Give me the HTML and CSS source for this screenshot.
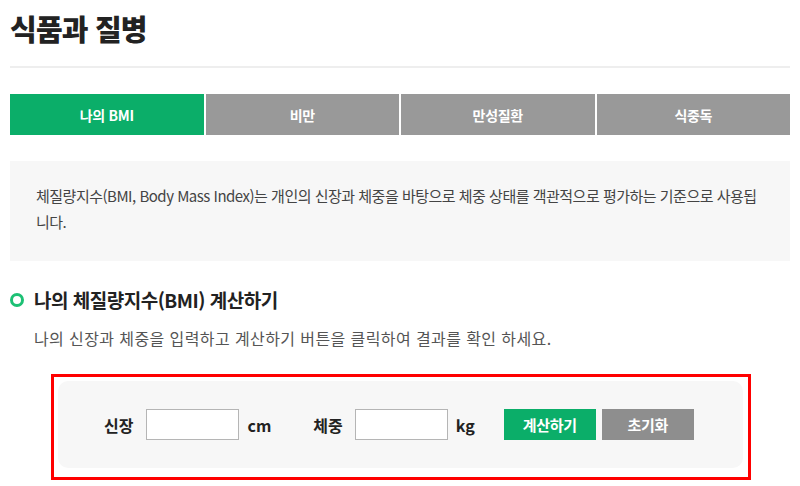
FILE: index.html
```html
<!DOCTYPE html>
<html lang="ko">
<head>
<meta charset="utf-8">
<title>식품과 질병</title>
<link rel="stylesheet" href="styles.css">
</head>
<body>
<div class="page">
  <header class="page-head">
    <h1 class="page-title">식품과 질병</h1>
  </header>
  <nav class="tabs">
    <a class="tab active">나의 BMI</a>
    <a class="tab">비만</a>
    <a class="tab">만성질환</a>
    <a class="tab">식중독</a>
  </nav>
  <div class="info-box">
    <p>체질량지수(BMI, Body Mass Index)는 개인의 신장과 체중을 바탕으로 체중 상태를 객관적으로 평가하는 기준으로 사용됩니다.</p>
  </div>
  <h2 class="section-title"><span class="ring"></span>나의 체질량지수(BMI) 계산하기</h2>
  <p class="section-desc">나의 신장과 체중을 입력하고 계산하기 버튼을 클릭하여 결과를 확인 하세요.</p>
  <div class="calc-frame">
    <form class="calc-box">
      <label class="lbl lbl-h">신장</label>
      <input class="num" type="text">
      <span class="unit unit-cm">cm</span>
      <label class="lbl lbl-w">체중</label>
      <input class="num" type="text">
      <span class="unit unit-kg">kg</span>
      <button type="button" class="btn btn-calc">계산하기</button>
      <button type="button" class="btn btn-reset">초기화</button>
    </form>
  </div>
</div>
</body>
</html>
```
FILE: styles.css
```css
* { box-sizing: border-box; }
html, body { margin: 0; padding: 0; background: #fff; }
body {
  font-family: "Noto Sans CJK KR", "Noto Sans", sans-serif;
  color: #222;
}
.page { padding: 0 10px; }
.page-head {
  padding-top: 8px;
  padding-bottom: 18px;
  border-bottom: 2px solid #eeeeee;
}
.page-title {
  margin: 0;
  font-size: 29px;
  line-height: 40px;
  font-weight: 900;
  letter-spacing: -0.8px;
  color: #222;
}
.tabs {
  display: flex;
  gap: 2px;
  margin-top: 26px;
}
.tab {
  flex: 1;
  height: 41px;
  display: flex;
  align-items: center;
  justify-content: center;
  background: #999999;
  color: #fff;
  font-size: 14px;
  font-weight: 700;
  letter-spacing: -0.3px;
}
.tab.active { background: #0bae69; }
.info-box {
  margin-top: 26px;
  background: #f7f7f7;
  padding: 22px 30px 26px 26px;
  height: 100px;
}
.info-box p {
  margin: 0;
  font-size: 15px;
  line-height: 26px;
  letter-spacing: -0.5px;
  color: #444;
  word-break: break-all;
}
.section-title {
  margin: 27px 0 0;
  display: flex;
  align-items: center;
  font-size: 19px;
  line-height: 24px;
  font-weight: 700;
  letter-spacing: -0.5px;
  color: #222;
}
.ring {
  width: 14px;
  height: 14px;
  border: 3px solid #1cc074;
  border-radius: 50%;
  margin-right: 10px;
}
.section-desc {
  margin: 13px 0 0;
  padding-left: 24px;
  font-size: 16px;
  line-height: 26px;
  letter-spacing: 0.4px;
  color: #555;
}
.calc-frame {
  margin: 23px 0 0 41px;
  width: 700px;
  border: 3px solid #ff0000;
  padding: 4px 5px 9px 4px;
}
.calc-box {
  background: #f7f7f7;
  border-radius: 10px;
  height: 87px;
  display: flex;
  align-items: center;
  padding-left: 46px;
  margin: 0;
}
.lbl, .unit {
  font-size: 16px;
  font-weight: 700;
  color: #222;
  letter-spacing: 0;
}
.lbl-h { margin-right: 13px; }
.lbl-w { margin-right: 12px; }
.num {
  width: 93px;
  height: 31px;
  border: 1px solid #b5b5b5;
  background: #fff;
  margin: 0;
  padding: 0 6px;
}
.unit { margin-left: 8px; }
.unit-cm { margin-right: 42px; }
.unit-kg { margin-right: 29px; }
.btn {
  width: 92px;
  height: 31px;
  border: 0;
  margin: 0;
  color: #fff;
  font-family: inherit;
  font-size: 15px;
  font-weight: 700;
  letter-spacing: -0.3px;
  cursor: pointer;
}
.btn-calc { background: #0bae69; margin-right: 6px; }
.btn-reset { background: #8e8e8e; }
```
